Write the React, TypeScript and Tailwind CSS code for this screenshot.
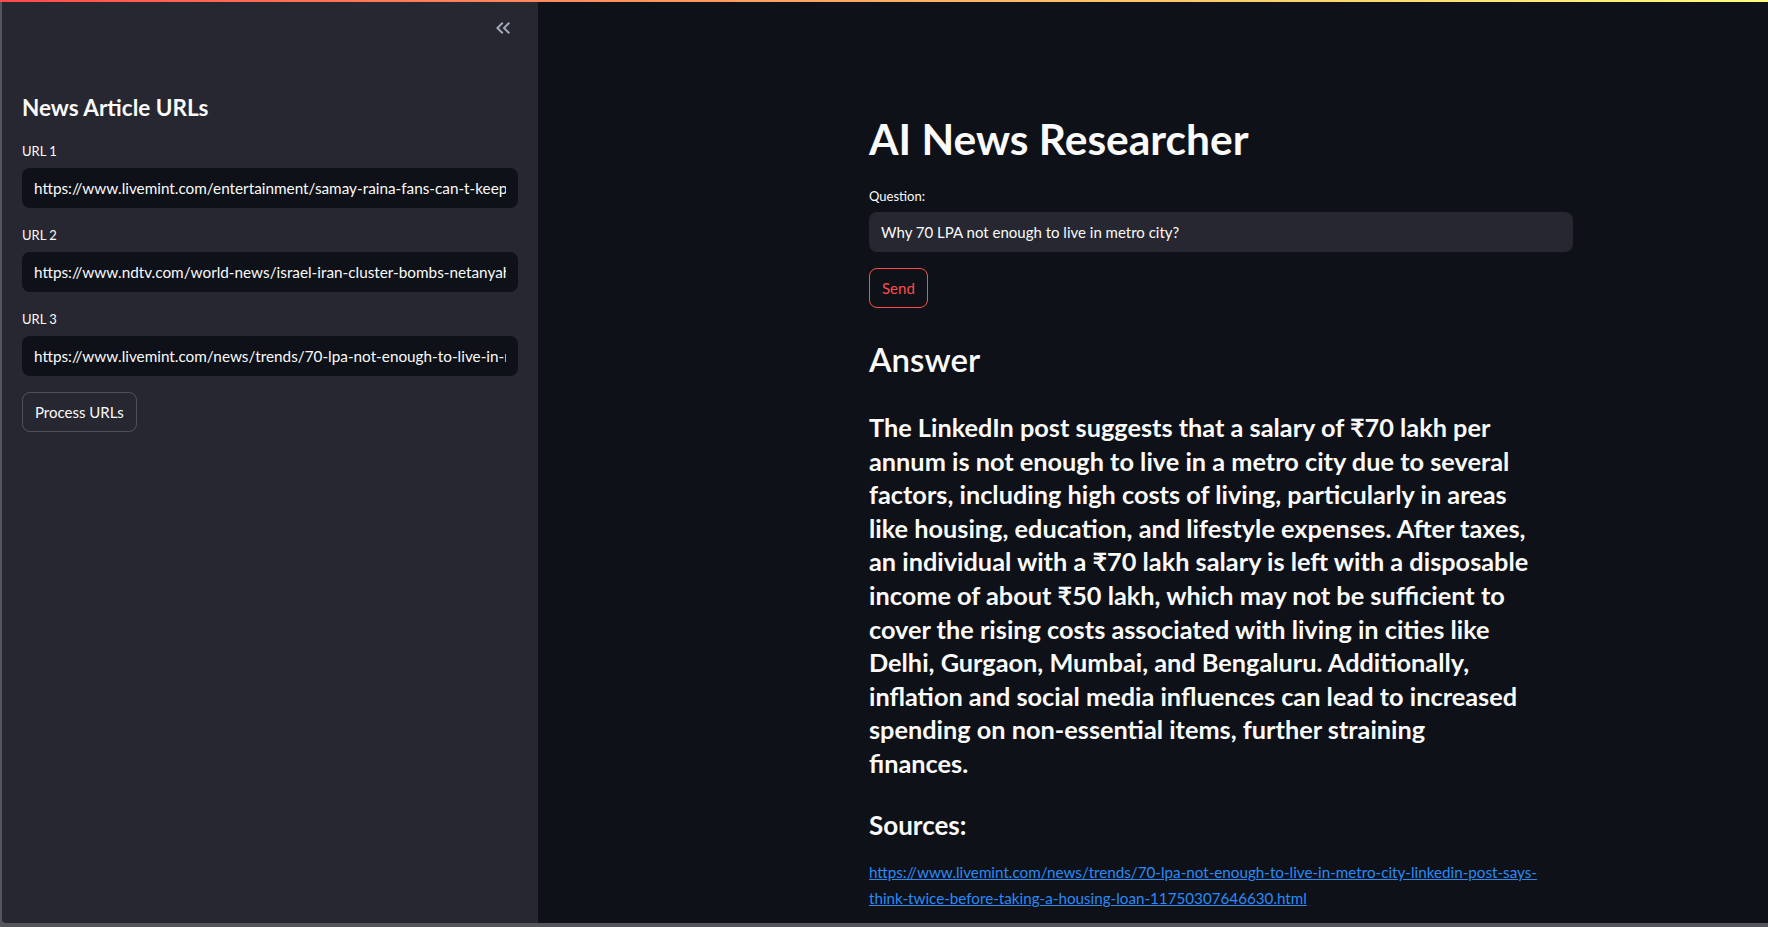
import { useState } from "react"

const font = { fontFamily: "Lato, 'Noto Sans', sans-serif" }

export default function App() {

    const [urls, setUrls] = useState([
        "https://www.livemint.com/entertainment/samay-raina-fans-can-t-keep-calm-as-comedian-returns",
        "https://www.ndtv.com/world-news/israel-iran-cluster-bombs-netanyahu",
        "https://www.livemint.com/news/trends/70-lpa-not-enough-to-live-in-metro-city-linkedin-post-says-think-twice-before-taking-a-housing-loan-11750307646630.html",
    ])
    const [question, setQuestion] = useState("Why 70 LPA not enough to live in metro city?")

    // lines as they wrap in the answer block
    const answer = [
        "The LinkedIn post suggests that a salary of ₹70 lakh per",
        "annum is not enough to live in a metro city due to several",
        "factors, including high costs of living, particularly in areas",
        "like housing, education, and lifestyle expenses. After taxes,",
        "an individual with a ₹70 lakh salary is left with a disposable",
        "income of about ₹50 lakh, which may not be sufficient to",
        "cover the rising costs associated with living in cities like",
        "Delhi, Gurgaon, Mumbai, and Bengaluru. Additionally,",
        "inflation and social media influences can lead to increased",
        "spending on non-essential items, further straining",
        "finances.",
    ]

    const UrlInput = ({ label, index, first }: { label: string, index: number, first?: boolean }) => {
        return (
            <div className={first ? "mt-[18px]" : "mt-[17px]"}>
                <div className="text-[13px] leading-[20px] text-[#fafafa]">{label}</div>
                <input
                    className="mt-[7px] h-10 w-full rounded-lg bg-[#0e1117] px-3 text-[15.3px] text-[#fafafa] outline-none"
                    style={font}
                    value={urls[index]}
                    onChange={(e) => {
                        const copy = [...urls]
                        copy[index] = e.target.value
                        setUrls(copy)
                    }}
                />
            </div>
        )
    }

    return (
        <div className="flex h-[927px] flex-col overflow-hidden bg-[#55565b]" style={font}>
            <div className="h-[2px] shrink-0 bg-gradient-to-r from-[#ff4b4b] to-[#fffd80]" />
            <div className="flex min-h-0 flex-1 pb-[4px] pl-[2px]">
                <aside className="w-[536px] shrink-0 rounded-bl-[4px] bg-[#262730] px-5">
                    <div className="flex h-[52px] items-center justify-end pr-[3px]">
                        <svg className="h-6 w-6 text-[#a3a8b8]" viewBox="0 0 24 24" fill="currentColor">
                            <path d="M17.59 18 19 16.59 14.42 12 19 7.41 17.59 6l-6 6z" />
                            <path d="M11 18l1.41-1.41L7.83 12l4.58-4.59L11 6l-6 6z" />
                        </svg>
                    </div>
                    <h2 className="mt-[39px] text-[22.5px] font-bold leading-[30px] text-[#fafafa]">News Article URLs</h2>
                    <UrlInput label="URL 1" index={0} first />
                    <UrlInput label="URL 2" index={1} />
                    <UrlInput label="URL 3" index={2} />
                    <button
                        type="button"
                        className="mt-4 h-10 rounded-lg border border-[#fafafa33] px-3 text-[15px] text-[#fafafa]"
                    >Process URLs</button>
                </aside>

                <main className="min-w-0 flex-1 bg-[#0e1117]">
                    <div className="ml-[331px] w-[704px] text-[#fafafa]">
                        <h1 className="mt-[113px] text-[42.5px] font-bold leading-[48px]">AI News Researcher</h1>
                        <div className="mt-[23px] text-[13px] leading-[20px]">Question:</div>
                        <input
                            className="mt-[6px] h-10 w-full rounded-lg bg-[#262730] px-3 text-[15px] text-[#fafafa] outline-none"
                            style={font}
                            value={question}
                            onChange={(e) => setQuestion(e.target.value)}
                        />
                        <button
                            type="button"
                            className="mt-4 h-10 rounded-lg border border-[#ff4b4b] px-3 text-[15px] text-[#ff4b4b]"
                        >Send</button>

                        <h2 className="mt-[32px] text-[33px] font-semibold leading-[38px]">Answer</h2>
                        <h3 className="mt-[33px] text-[25.3px] font-bold leading-[33.6px]">
                            {answer.map((line) => <span key={line} className="block whitespace-nowrap">{line}</span>)}
                        </h3>

                        <h3 className="mt-[28px] text-[26px] font-bold leading-[33.6px]">Sources:</h3>
                        <div className="mt-[17px] text-[15.2px] leading-[26px]">
                            <a href="#" className="text-[#2a8af6] underline">
                                https://www.livemint.com/news/trends/70-lpa-not-enough-to-live-in-metro-city-linkedin-post-says-<br />think-twice-before-taking-a-housing-loan-11750307646630.html
                            </a>
                        </div>
                    </div>
                </main>
            </div>
        </div>
    )
}
